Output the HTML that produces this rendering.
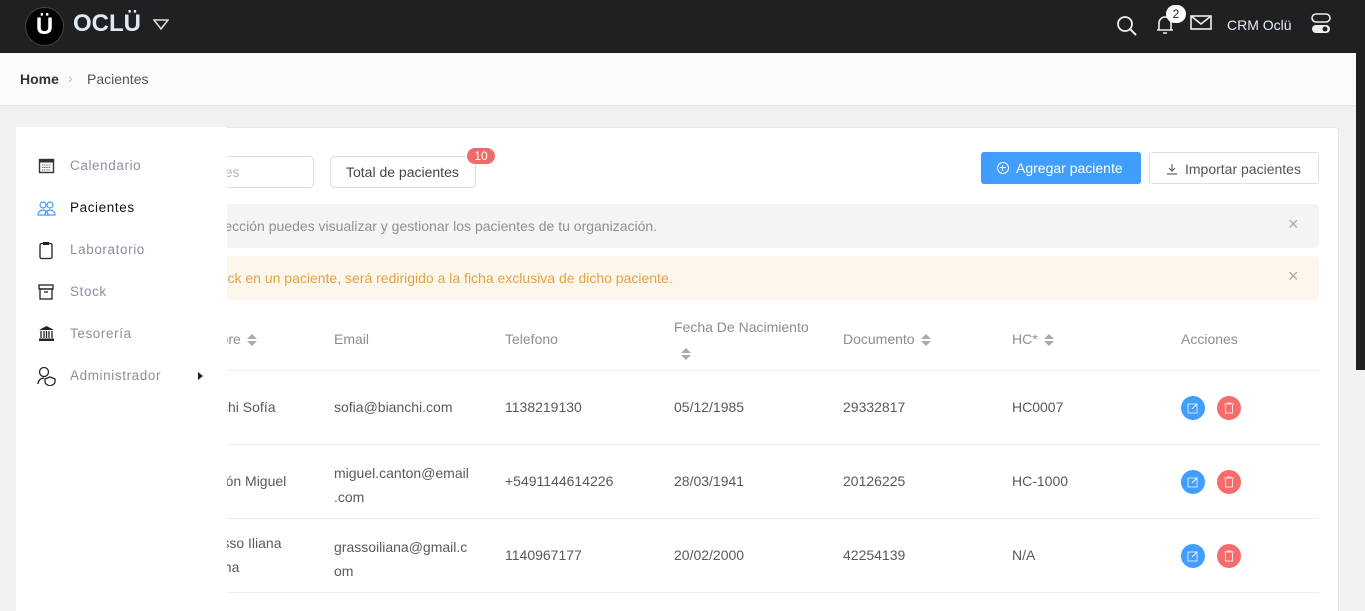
<!DOCTYPE html>
<html style="overflow:hidden;height:611px"><head><meta charset="utf-8"><style>
*{box-sizing:border-box;margin:0;padding:0}
body{width:1365px;height:611px;overflow:hidden;background:#f0f1f3;font-family:"Liberation Sans",sans-serif;position:relative;color:#555}
.a{position:absolute;white-space:nowrap}
.top{left:0;top:0;width:1365px;height:53px;background:#1f2022}
.bc{left:0;top:53px;width:1365px;height:53px;background:#fafafa;border-bottom:1px solid #e6e7ea}
.card{left:16px;top:127px;width:1323px;height:484px;background:#fff;border-radius:4px 4px 0 0;border:1px solid #e4e6ea;border-bottom:0}
.side{left:16px;top:127px;width:211px;height:484px;background:#fff}
.si{font-size:13.5px;color:#8a8fa0;letter-spacing:.6px}
.th{font-size:14px;color:#8a8d94}
.td{font-size:14px;color:#555a60}
.hr{height:1px;background:#ebedf2;left:190px;width:1129px}
.ic{width:24px;height:24px;border-radius:50%}
.sort{display:inline-block;vertical-align:middle;margin-left:6px;width:10px;height:12px;position:relative}
.sort:before{content:"";position:absolute;top:0;left:0;border:5px solid transparent;border-top:0;border-bottom:5px solid #aaa}
.sort:after{content:"";position:absolute;bottom:0;left:0;border:5px solid transparent;border-bottom:0;border-top:5px solid #aaa}
</style></head><body>
<div class="a top"></div>
<div class="a" style="left:25px;top:7px;width:39px;height:39px;border-radius:50%;background:#000;border:1px solid #444;color:#fff;font:bold 24px 'Liberation Sans',sans-serif;text-align:center;line-height:37px">Ü</div>
<div class="a" style="left:73px;top:10px;color:#dfe9f5;font:bold 24px 'Liberation Sans',sans-serif">OCLÜ</div>
<svg class="a" style="left:153px;top:18px" width="16" height="14"><path d="M1 2h14L8 11z" fill="none" stroke="#ddd" stroke-width="1.6"/></svg>
<svg class="a" style="left:1116px;top:14px" width="22" height="24"><circle cx="9" cy="10" r="7" fill="none" stroke="#eee" stroke-width="1.8"/><path d="M14 15l6 6" stroke="#eee" stroke-width="2"/></svg>
<svg class="a" style="left:1155px;top:12px" width="20" height="24"><path d="M4 18V11a6 6 0 0112 0v7M2 18h16M8 21h4" fill="none" stroke="#eee" stroke-width="1.6"/></svg>
<div class="a" style="left:1166px;top:5px;width:20px;height:18px;border-radius:9px;background:#fff;color:#222;font-size:12px;text-align:center;line-height:18px">2</div>
<svg class="a" style="left:1190px;top:15px" width="22" height="16"><rect x="1" y="1" width="20" height="13" fill="none" stroke="#eee" stroke-width="1.6"/><path d="M1 1l10 8 10-8" fill="none" stroke="#eee" stroke-width="1.6"/></svg>
<div class="a" style="left:1227px;top:17px;color:#e6eef8;font-size:14px">CRM Oclü</div>
<svg class="a" style="left:1310px;top:12px" width="22" height="24"><rect x="2" y="2" width="18" height="8" rx="4" fill="none" stroke="#eee" stroke-width="1.6"/><rect x="2" y="13" width="18" height="8" rx="4" fill="#eee"/><circle cx="15" cy="17" r="2.5" fill="#1f2022"/></svg>
<div class="a bc"></div>
<div class="a" style="left:20px;top:71px;font-size:14px;font-weight:bold;color:#333">Home</div>
<div class="a" style="left:68px;top:70px;font-size:14px;color:#bbb">›</div>
<div class="a" style="left:87px;top:71px;font-size:14px;color:#555">Pacientes</div>
<div class="a card"></div>
<div class="a" style="left:1356px;top:0;width:9px;height:370px;background:#1f2022"></div>

<div class="a" style="left:190px;top:156px;width:124px;height:32px;border:1px solid #dcdfe6;border-radius:4px"></div>
<div class="a" style="left:132px;top:164px;font-size:14px;color:#b0b3b9">Buscar pacientes</div>
<div class="a" style="left:330px;top:156px;width:146px;height:32px;border:1px solid #dcdfe6;border-radius:4px;font-size:14px;color:#444;padding:7px 0 0 15px">Total de pacientes</div>
<div class="a" style="left:467px;top:148px;width:28px;height:16px;border-radius:8px;background:#f06a6a;color:#fff;font-size:12px;text-align:center;line-height:16px">10</div>
<div class="a" style="left:981px;top:152px;width:160px;height:32px;border-radius:3px;background:#409eff;color:#fff;font-size:14px;padding:8px 0 0 16px"><span style="display:inline-block;width:12px;height:12px;border:1.4px solid #fff;border-radius:50%;vertical-align:-1px;margin-right:7px;position:relative"><span style="position:absolute;left:4px;top:1.5px;width:1.4px;height:6px;background:#fff"></span><span style="position:absolute;left:1.5px;top:4px;width:6px;height:1.4px;background:#fff"></span></span>Agregar paciente</div>
<div class="a" style="left:1149px;top:152px;width:170px;height:32px;border-radius:3px;border:1px solid #dcdfe6;color:#555;font-size:14px;padding:8px 0 0 16px"><svg width="12" height="12" style="vertical-align:-1px;margin-right:7px"><path d="M6 1v7M3 5l3 3 3-3M1 11h10" fill="none" stroke="#666" stroke-width="1.2"/></svg>Importar pacientes</div>
<div class="a" style="left:190px;top:204px;width:1129px;height:44px;background:#f4f4f5;border-radius:4px"></div>
<div class="a" style="left:166px;top:218px;font-size:14px;color:#8d9095">En esta sección puedes visualizar y gestionar los pacientes de tu organización.</div>
<div class="a" style="left:1288px;top:214px;color:#aaa;font-size:18px">×</div>
<div class="a" style="left:190px;top:256px;width:1129px;height:44px;background:#fdf6ec;border-radius:4px"></div>
<div class="a" style="left:159px;top:270px;font-size:14px;color:#e6a23c">Al hacer click en un paciente, será redirigido a la ficha exclusiva de dicho paciente.</div>
<div class="a" style="left:1288px;top:266px;color:#aaa;font-size:18px">×</div>

<div class="a th" style="left:191px;top:331px">Nombre<span class="sort"></span></div>
<div class="a th" style="left:334px;top:331px">Email</div>
<div class="a th" style="left:505px;top:331px">Telefono</div>
<div class="a th" style="left:674px;top:319px">Fecha De Nacimiento</div>
<div class="a" style="left:681px;top:345px"><span class="sort" style="margin:0"></span></div>
<div class="a th" style="left:843px;top:331px">Documento<span class="sort"></span></div>
<div class="a th" style="left:1012px;top:331px">HC*<span class="sort"></span></div>
<div class="a th" style="left:1181px;top:331px">Acciones</div>
<div class="a hr" style="top:370px"></div>

<div class="a td" style="left:193px;top:399px">Bianchi Sofía</div>
<div class="a td" style="left:334px;top:399px">sofia@bianchi.com</div>
<div class="a td" style="left:505px;top:399px">1138219130</div>
<div class="a td" style="left:674px;top:399px">05/12/1985</div>
<div class="a td" style="left:843px;top:399px">29332817</div>
<div class="a td" style="left:1012px;top:399px">HC0007</div>
<div class="a hr" style="top:444px"></div>

<div class="a td" style="left:196px;top:473px">Cantón Miguel</div>
<div class="a td" style="left:334px;top:461px;line-height:24px">miguel.canton@email<br>.com</div>
<div class="a td" style="left:505px;top:473px">+5491144614226</div>
<div class="a td" style="left:674px;top:473px">28/03/1941</div>
<div class="a td" style="left:843px;top:473px">20126225</div>
<div class="a td" style="left:1012px;top:473px">HC-1000</div>
<div class="a hr" style="top:518px"></div>

<div class="a td" style="left:199px;top:535px">Grasso Iliana</div>
<div class="a td" style="left:195px;top:559px">Juliana</div>
<div class="a td" style="left:334px;top:535px;line-height:24px">grassoiliana@gmail.c<br>om</div>
<div class="a td" style="left:505px;top:547px">1140967177</div>
<div class="a td" style="left:674px;top:547px">20/02/2000</div>
<div class="a td" style="left:843px;top:547px">42254139</div>
<div class="a td" style="left:1012px;top:547px">N/A</div>
<div class="a hr" style="top:592px"></div>

<div class="a ic" style="left:1181px;top:396px;background:#409eff"></div><div class="a ic" style="left:1217px;top:396px;background:#f56c6c"></div>
<div class="a ic" style="left:1181px;top:470px;background:#409eff"></div><div class="a ic" style="left:1217px;top:470px;background:#f56c6c"></div>
<div class="a ic" style="left:1181px;top:544px;background:#409eff"></div><div class="a ic" style="left:1217px;top:544px;background:#f56c6c"></div>
<svg class="a" style="left:1187px;top:402px" width="12" height="12"><rect x="1" y="2" width="9" height="9" fill="none" stroke="#cfe4ff"/><path d="M5 7l5-5" stroke="#fff"/></svg>
<svg class="a" style="left:1187px;top:476px" width="12" height="12"><rect x="1" y="2" width="9" height="9" fill="none" stroke="#cfe4ff"/><path d="M5 7l5-5" stroke="#fff"/></svg>
<svg class="a" style="left:1187px;top:550px" width="12" height="12"><rect x="1" y="2" width="9" height="9" fill="none" stroke="#cfe4ff"/><path d="M5 7l5-5" stroke="#fff"/></svg>
<svg class="a" style="left:1223px;top:402px" width="12" height="12"><path d="M1 2h10M4 2V1h4v1M2.5 3v8h7V3" fill="none" stroke="#fdd"/></svg>
<svg class="a" style="left:1223px;top:476px" width="12" height="12"><path d="M1 2h10M4 2V1h4v1M2.5 3v8h7V3" fill="none" stroke="#fdd"/></svg>
<svg class="a" style="left:1223px;top:550px" width="12" height="12"><path d="M1 2h10M4 2V1h4v1M2.5 3v8h7V3" fill="none" stroke="#fdd"/></svg>

<div class="a side"></div>
<svg class="a" style="left:38px;top:157px" width="17" height="17"><rect x="1.5" y="2.5" width="14" height="13" fill="none" stroke="#333" stroke-width="1.4"/><rect x="1.5" y="2.5" width="14" height="3" fill="#333"/><path d="M4 8h9M4 10.5h9M4 13h9" stroke="#555" stroke-dasharray="1.2 1"/></svg>
<div class="a si" style="left:70px;top:158px">Calendario</div>
<svg class="a" style="left:37px;top:200px" width="19" height="16"><circle cx="6" cy="5" r="3" fill="none" stroke="#409eff" stroke-width="1.2"/><circle cx="13" cy="5" r="3" fill="none" stroke="#409eff" stroke-width="1.2"/><path d="M1 15a5 5 0 0110 0zM8 15a5 5 0 0110 0z" fill="none" stroke="#409eff" stroke-width="1.2"/></svg>
<div class="a si" style="left:70px;top:200px;color:#111">Pacientes</div>
<svg class="a" style="left:39px;top:241px" width="14" height="19"><rect x="1" y="2.5" width="12" height="15" rx="1.5" fill="none" stroke="#222" stroke-width="1.3"/><rect x="4" y="1" width="6" height="3" fill="#222"/></svg>
<div class="a si" style="left:70px;top:242px">Laboratorio</div>
<svg class="a" style="left:38px;top:284px" width="16" height="16"><rect x="1" y="1" width="14" height="4" fill="none" stroke="#222" stroke-width="1.3"/><rect x="2" y="5" width="12" height="10" fill="none" stroke="#222" stroke-width="1.3"/><path d="M6 8h4" stroke="#222" stroke-width="1.3"/></svg>
<div class="a si" style="left:70px;top:284px">Stock</div>
<svg class="a" style="left:38px;top:325px" width="17" height="17"><path d="M8.5 1L1 5h15z" fill="#222"/><path d="M3 6v7M6 6v7M8.5 6v7M11 6v7M14 6v7" stroke="#222" stroke-width="1.3"/><rect x="1" y="13.5" width="15" height="2.5" fill="#222"/></svg>
<div class="a si" style="left:70px;top:326px">Tesorería</div>
<svg class="a" style="left:37px;top:366px" width="20" height="20"><circle cx="7" cy="6" r="4.5" fill="none" stroke="#222" stroke-width="1.3"/><path d="M1 18a6 6 0 016-6" fill="none" stroke="#222" stroke-width="1.3"/><path d="M13 11l5 2v3c0 2-2 3-5 4c-3-1-5-2-5-4v-3z" fill="none" stroke="#222" stroke-width="1.3"/></svg>
<div class="a si" style="left:70px;top:368px">Administrador</div>
<svg class="a" style="left:197px;top:371px" width="8" height="10"><path d="M1 1l5 4-5 4z" fill="#222"/></svg>
</body></html>
